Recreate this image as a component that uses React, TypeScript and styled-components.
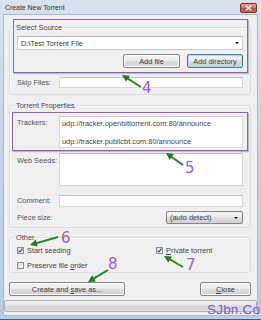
import React from "react";
import styled, { createGlobalStyle } from "styled-components";

const Global = createGlobalStyle`
  html, body { margin: 0; padding: 0; background: #ffffff; }
  body { font-family: "Liberation Sans", Arial, sans-serif; }
  * { box-sizing: border-box; }
`;

const Window = styled.div`
  position: relative;
  width: 261px;
  height: 320px;
  padding: 0 4px 4px 4px;
  display: flex;
  flex-direction: column;
  background: linear-gradient(180deg, #d9e3ee 0%, #c6d6e8 40%, #b9cde3 100%);
  border-bottom: 1px solid #3d5f86;
  font-family: "Liberation Sans", Arial, sans-serif;
  font-size: 7.4px;
  color: #454545;
  overflow: hidden;
`;

const TitleBar = styled.div`
  height: 15px;
  display: flex;
  align-items: center;
  justify-content: space-between;
  padding-left: 1px;
`;

const Title = styled.span`
  font-size: 6.9px;
  color: #333333;
  line-height: 9px;
`;

const CloseBox = styled.div`
  width: 17px;
  height: 10px;
  border: 1px solid #7a3326;
  border-radius: 2px;
  background: linear-gradient(180deg, #e9a393 0%, #d6705a 50%, #c24a32 51%, #cf6a50 100%);
  display: flex;
  align-items: center;
  justify-content: center;
`;

const Client = styled.div`
  flex: 1;
  display: flex;
  flex-direction: column;
  padding: 8px 6px 0 5px;
  background: #f0f0f0;
  box-shadow: 0 0 0 1px #a6bbd2;
`;

const Group = styled.fieldset<{ $mt: number; $pt: number; $pb: number }>`
  margin: ${(p) => p.$mt}px 0 0 0;
  min-width: 0;
  border: 1px solid #dadfe4;
  border-radius: 3px;
  padding: ${(p) => p.$pt}px 7px ${(p) => p.$pb}px 7px;
  display: flex;
  flex-direction: column;
  box-shadow: inset 1px 1px 0 #fbfbfb;
`;

const Legend = styled.legend`
  padding: 0 1px;
  margin-left: -2px;
  line-height: 9px;
  font-size: 7.4px;
  color: #454545;
`;

const Combo = styled.div`
  height: 14px;
  display: flex;
  align-items: center;
  justify-content: space-between;
  padding: 0 3px 0 3px;
  background: #ffffff;
  border: 1px solid #c6cbd2;
  border-top-color: #b4b9c0;
  color: #3a3a3a;
`;

const DropArrow = styled.span`
  width: 0;
  height: 0;
  border-left: 2.5px solid transparent;
  border-right: 2.5px solid transparent;
  border-top: 2.5px solid #111;
`;

const ButtonRow = styled.div<{ $mt: number; $justify: string }>`
  margin-top: ${(p) => p.$mt}px;
  display: flex;
  justify-content: ${(p) => p.$justify};
  gap: 7px;
`;

const Button = styled.div<{ $w: number; $isDefault?: boolean }>`
  width: ${(p) => p.$w}px;
  height: 14px;
  display: flex;
  align-items: center;
  justify-content: center;
  border: 1px solid ${(p) => (p.$isDefault ? "#3c7fb1" : "#858585")};
  border-radius: 2px;
  background: linear-gradient(180deg, #f3f3f3 0%, #ebebeb 48%, #dddddd 52%, #d2d2d2 100%);
  box-shadow: inset 0 0 0 1px ${(p) => (p.$isDefault ? "#a4def5" : "#fbfbfb")};
  color: #3a3a3a;
  line-height: 9px;
`;

const FieldRow = styled.div<{ $mt: number }>`
  margin-top: ${(p) => p.$mt}px;
  display: flex;
  align-items: flex-start;
`;

const Label = styled.span<{ $pt: number }>`
  width: 42px;
  flex: none;
  padding-top: ${(p) => p.$pt}px;
  line-height: 9px;
  color: #555555;
`;

const Input = styled.div<{ $h: number }>`
  flex: 1;
  height: ${(p) => p.$h}px;
  background: #ffffff;
  border: 1px solid #d5d9df;
  border-top-color: #bfc4ca;
`;

const TextBox = styled.div<{ $h: number }>`
  flex: 1;
  height: ${(p) => p.$h}px;
  padding: 2px 0 0 2px;
  background: #ffffff;
  border: 1px solid #d5d9df;
  border-top-color: #bfc4ca;
  line-height: 9px;
  color: #454545;
  white-space: pre;
`;

const Spacer = styled.div`
  flex: 1;
`;

const Select = styled.div`
  width: 77px;
  height: 13px;
  display: flex;
  align-items: center;
  justify-content: space-between;
  padding: 0 4px 0 3px;
  border: 1px solid #858585;
  border-radius: 2px;
  background: linear-gradient(180deg, #f3f3f3 0%, #ebebeb 48%, #dddddd 52%, #d2d2d2 100%);
  color: #3a3a3a;
`;

const CheckGrid = styled.div`
  display: grid;
  grid-template-columns: 139px 1fr;
  row-gap: 6px;
`;

const CheckItem = styled.div`
  display: flex;
  align-items: center;
  gap: 3px;
  height: 9px;
  color: #454545;
`;

const Box = styled.span`
  width: 7px;
  height: 7px;
  flex: none;
  border: 1px solid #8e8f8f;
  background: linear-gradient(135deg, #d9dcdf 0%, #f6f6f6 100%);
  display: flex;
  align-items: center;
  justify-content: center;
`;

const Progress = styled.div`
  margin: 4px -6px 0 -5px;
  height: 12px;
  border: 1px solid #b2b2b2;
  border-radius: 2px;
  background: linear-gradient(180deg, #f2f2f2 0%, #e3e3e3 45%, #d5d5d5 55%, #dcdcdc 100%);
`;

/* ---- annotation overlays ---- */

const Highlight = styled.div`
  position: absolute;
  border: 1px solid #8c5fca;
  box-shadow: 1px 1px 1px rgba(0, 0, 0, 0.22);
  pointer-events: none;
`;

const Num = styled.span`
  position: absolute;
  font-family: "DejaVu Sans", "Liberation Sans", sans-serif;
  font-size: 15px;
  line-height: 16px;
  color: #9a5ed8;
`;

const Watermark = styled.span`
  position: absolute;
  left: 207px;
  top: 302px;
  font-family: "Liberation Sans", Arial, sans-serif;
  font-size: 13.5px;
  line-height: 16px;
  color: #7458d8;
  letter-spacing: 0.2px;
`;

const Overlay = styled.svg`
  position: absolute;
  left: 0;
  top: 0;
  pointer-events: none;
`;

const Check = () => (
  <svg width="5" height="5" viewBox="0 0 5 5">
    <path d="M0.6 2.6 L1.9 4 L4.4 0.7" stroke="#233c7a" strokeWidth="1.1" fill="none" />
  </svg>
);

function Arrow({ x1, y1, x2, y2 }: { x1: number; y1: number; x2: number; y2: number }) {
  const dx = x2 - x1;
  const dy = y2 - y1;
  const len = Math.hypot(dx, dy);
  const ux = dx / len;
  const uy = dy / len;
  const hl = 7;
  const hw = 3.6;
  const bx = x2 - ux * hl;
  const by = y2 - uy * hl;
  const px = -uy;
  const py = ux;
  const pts = `${x2},${y2} ${bx + px * hw},${by + py * hw} ${bx - px * hw},${by - py * hw}`;
  return (
    <g>
      <line x1={x1} y1={y1} x2={bx + ux} y2={by + uy} stroke="#1f8a1f" strokeWidth="2" />
      <polygon points={pts} fill="#1a7f1a" />
    </g>
  );
}

export default function App() {
  return (
    <>
      <Global />
      <Window>
        <TitleBar>
          <Title>Create New Torrent</Title>
          <CloseBox>
            <svg width="7" height="6" viewBox="0 0 7 6">
              <path d="M1 0.8 L6 5.2 M6 0.8 L1 5.2" stroke="#ffffff" strokeWidth="1.4" />
            </svg>
          </CloseBox>
        </TitleBar>
        <Client>
          <Group $mt={0} $pt={4} $pb={6}>
            <Legend>Select Source</Legend>
            <Combo>
              <span>D:\Test Torrent File</span>
              <DropArrow />
            </Combo>
            <ButtonRow $mt={4} $justify="flex-end">
              <Button $w={57}>Add file</Button>
              <Button $w={56} $isDefault>
                Add directory
              </Button>
            </ButtonRow>
            <FieldRow $mt={9}>
              <Label $pt={1}>Skip Files:</Label>
              <Input $h={11} />
            </FieldRow>
          </Group>

          <Group $mt={6} $pt={6} $pb={3}>
            <Legend>Torrent Properties</Legend>
            <FieldRow $mt={0}>
              <Label $pt={2}>Trackers:</Label>
              <TextBox $h={32}>
                {"udp://tracker.openbittorrent.com:80/announce\n\nudp://tracker.publicbt.com:80/announce"}
              </TextBox>
            </FieldRow>
            <FieldRow $mt={5}>
              <Label $pt={3}>Web Seeds:</Label>
              <Input $h={33} />
            </FieldRow>
            <FieldRow $mt={9}>
              <Label $pt={1}>Comment:</Label>
              <Input $h={12} />
            </FieldRow>
            <FieldRow $mt={4}>
              <Label $pt={2}>Piece size:</Label>
              <Spacer />
              <Select>
                <span>(auto detect)</span>
                <DropArrow />
              </Select>
            </FieldRow>
          </Group>

          <Group $mt={5} $pt={4} $pb={2}>
            <Legend>Other</Legend>
            <CheckGrid>
              <CheckItem>
                <Box>
                  <Check />
                </Box>
                <span>Start seeding</span>
              </CheckItem>
              <CheckItem>
                <Box>
                  <Check />
                </Box>
                <span>
                  <u>P</u>rivate torrent
                </span>
              </CheckItem>
              <CheckItem>
                <Box />
                <span>
                  Preserve file <u>o</u>rder
                </span>
              </CheckItem>
            </CheckGrid>
          </Group>

          <ButtonRow $mt={9} $justify="space-between">
            <Button $w={116}>
              <span>
                Create and <u>s</u>ave as...
              </span>
            </Button>
            <Button $w={51}>
              <span>
                <u>C</u>lose
              </span>
            </Button>
          </ButtonRow>
          <Progress />
        </Client>

        <Highlight style={{ left: 13, top: 19, width: 235, height: 54 }} />
        <Highlight style={{ left: 12, top: 112, width: 236, height: 39 }} />

        <Overlay width="261" height="320" viewBox="0 0 261 320">
          <Arrow x1={141} y1={87} x2={122} y2={75} />
          <Arrow x1={183} y1={165} x2={166} y2={153} />
          <Arrow x1={58} y1={237} x2={30} y2={245} />
          <Arrow x1={183} y1={267} x2={164} y2={256} />
          <Arrow x1={108} y1={270} x2={88} y2={282} />
        </Overlay>

        <Num style={{ left: 142, top: 80 }}>4</Num>
        <Num style={{ left: 185, top: 160 }}>5</Num>
        <Num style={{ left: 61, top: 230 }}>6</Num>
        <Num style={{ left: 186, top: 257 }}>7</Num>
        <Num style={{ left: 108, top: 256 }}>8</Num>
        <Watermark>SJbn.Co</Watermark>
      </Window>
    </>
  );
}
